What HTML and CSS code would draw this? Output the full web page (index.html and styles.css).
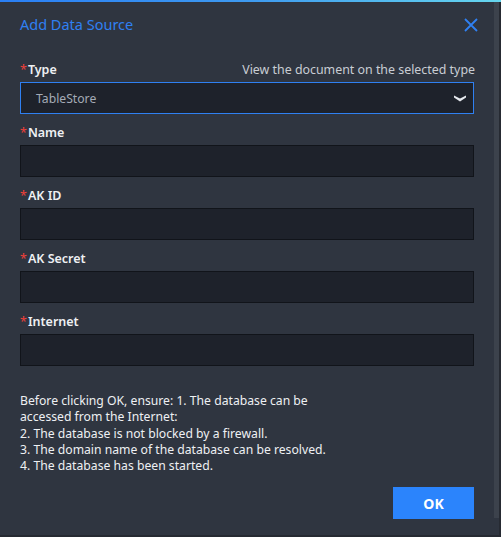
FILE: index.html
```html
<!DOCTYPE html>
<html>
<head>
<meta charset="utf-8">
<link rel="stylesheet" href="styles.css">
</head>
<body>
<div class="dialog">
  <div class="topline"></div>
  <div class="frame">
    <div class="content">
      <div class="header">
        <span class="title">Add Data Source</span>
        <svg class="close" width="14" height="14" viewBox="0 0 14 14"><path d="M1 1L13 13M13 1L1 13" stroke="#2f80f2" stroke-width="1.8" fill="none"/></svg>
      </div>
      <div class="field">
        <div class="label-row">
          <span class="label"><span class="req">*</span>Type</span>
          <span class="doc">View the document on the selected type</span>
        </div>
        <div class="input select">
          <span class="value">TableStore</span>
          <svg class="caret" width="12" height="7" viewBox="0 0 12 7"><path d="M0 0.5L6 3.5L12 0.5L12 2.5L6 6.5L0 2.5Z" fill="#e6e9ee"/></svg>
        </div>
      </div>
      <div class="field">
        <div class="label-row"><span class="label"><span class="req">*</span>Name</span></div>
        <div class="input"></div>
      </div>
      <div class="field">
        <div class="label-row"><span class="label"><span class="req">*</span>AK ID</span></div>
        <div class="input"></div>
      </div>
      <div class="field">
        <div class="label-row"><span class="label"><span class="req">*</span>AK Secret</span></div>
        <div class="input"></div>
      </div>
      <div class="field">
        <div class="label-row"><span class="label"><span class="req">*</span>Internet</span></div>
        <div class="input"></div>
      </div>
      <div class="note">Before clicking OK, ensure: 1. The database can be<br>accessed from the Internet:<br>2. The database is not blocked by a firewall.<br>3. The domain name of the database can be resolved.<br>4. The database has been started.</div>
      <div class="footer"><button class="ok">OK</button></div>
    </div>
    <div class="scrollbar"></div>
    <div class="edge"></div>
  </div>
  <div class="bottomline"></div>
</div>
</body>
</html>
```
FILE: styles.css
```css
html, body {
  margin: 0;
  padding: 0;
  background: #2f3540;
}
body {
  font-family: "Noto Sans", "Open Sans", sans-serif;
  color: #e8eaee;
  width: 501px;
  height: 537px;
  overflow: hidden;
}
.dialog {
  display: flex;
  flex-direction: column;
  height: 537px;
}
.topline {
  height: 2px;
  background: linear-gradient(90deg, #2a7ff5 0%, #3e9af0 50%, #66d6ee 100%);
}
.frame {
  flex: 1;
  display: flex;
}
.content {
  width: 454px;
  padding: 0 20px;
}
.scrollbar {
  width: 5px;
  height: 516px;
  background: #3c424c;
}
.edge {
  width: 2px;
  background: #262a32;
}
.bottomline {
  height: 2px;
  background: #262a32;
}
.header {
  height: 61px;
  display: flex;
  justify-content: space-between;
  align-items: flex-start;
}
.title {
  margin-top: 12px;
  font-size: 14.5px;
  color: #2f80f2;
  line-height: 20px;
}
.close {
  margin-top: 16px;
  margin-right: -4px;
}
.field {
  margin-bottom: 12px;
}
.label-row {
  height: 19px;
  display: flex;
  justify-content: space-between;
  align-items: flex-start;
  font-size: 12.4px;
  line-height: 14px;
}
.label {
  font-weight: 600;
  color: #eef0f3;
  font-size: 12.5px;
}
.req {
  color: #f0403a;
  font-weight: 400;
  margin-right: 1px;
}
.doc {
  color: #c9cdd4;
  margin-right: -1px;
}
.input {
  height: 30px;
  background: #1e222b;
  border: 1px solid #11141a;
  box-sizing: content-box;
}
.select {
  border-color: #2f80f2;
  display: flex;
  align-items: center;
  justify-content: space-between;
  padding: 0 7px 0 15px;
}
.value {
  font-size: 12.2px;
  color: #a4abb6;
}
.caret {
  margin-top: 1px;
}
.note {
  margin-top: 27px;
  font-size: 12.2px;
  line-height: 16.3px;
  color: #eef0f3;
}
.footer {
  display: flex;
  justify-content: flex-end;
  margin-top: 13px;
}
.ok {
  width: 81px;
  height: 32px;
  border: none;
  background: #2b84fc;
  color: #ffffff;
  font-family: "Noto Sans", sans-serif;
  font-weight: 700;
  font-size: 14px;
  padding: 0;
  margin-right: 0;
}
```
